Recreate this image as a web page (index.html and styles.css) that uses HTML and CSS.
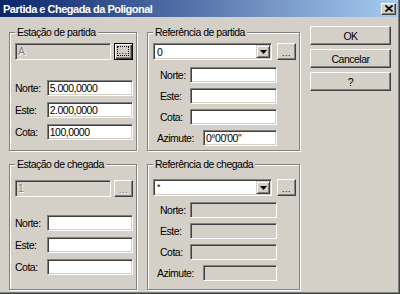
FILE: index.html
```html
<!DOCTYPE html>
<html>
  <head>
    <meta charset='UTF-8'>
    <title>Partida e Chegada da Poligonal</title>
    <link rel="stylesheet" href="styles.css">
  </head>
  <body>
    <div class='dialog'>
      <div class='titlebar'>
        <span class='titlebar__text'>Partida e Chegada da Poligonal</span>
        <span class='titlebar__close'>
          <svg width='8' height='7' viewBox='0 0 8 7'><path d='M0.5 0.5l7 6M7.5 0.5l-7 6' stroke='#000' stroke-width='1.7'/></svg>
        </span>
      </div>

      <div class='content'>
        <div class='groups'>
          <fieldset class='group group--top'>
            <legend class='group__title'>Estação de partida</legend>
            <div class='pick'>
              <div class='field field--off field--pick'>A</div>
              <div class='btn btn--dots btn--focus'><span class='btn__focus'>...</span></div>
            </div>
            <div class='coords coords--left'>
              <div class='row'><span class='row__label'>Norte:</span><div class='field'>5.000,0000</div></div>
              <div class='row'><span class='row__label'>Este:</span><div class='field'>2.000,0000</div></div>
              <div class='row'><span class='row__label'>Cota:</span><div class='field'>100,0000</div></div>
            </div>
          </fieldset>

          <fieldset class='group group--top group--ref'>
            <legend class='group__title'>Referência de partida</legend>
            <div class='pick'>
              <div class='combo'>
                <span class='combo__value'>0</span>
                <span class='combo__arrow'><svg width='7' height='4' viewBox='0 0 7 4'><path d='M0 0h7L3.5 4z' fill='#000'/></svg></span>
              </div>
              <div class='btn btn--dots'>...</div>
            </div>
            <div class='coords coords--right coords--first'>
              <div class='row row--ref'><span class='row__label'>Norte:</span><div class='field'></div></div>
              <div class='row row--ref'><span class='row__label'>Este:</span><div class='field'></div></div>
              <div class='row row--ref'><span class='row__label'>Cota:</span><div class='field'></div></div>
              <div class='row row--azimute'><span class='row__label'>Azimute:</span><div class='field field--az'>0°00'00"</div></div>
            </div>
          </fieldset>

          <fieldset class='group group--bottom'>
            <legend class='group__title'>Estação de chegada</legend>
            <div class='pick'>
              <div class='field field--off field--pick'>1</div>
              <div class='btn btn--dots btn--off'>...</div>
            </div>
            <div class='coords coords--left coords--chegada'>
              <div class='row'><span class='row__label'>Norte:</span><div class='field'></div></div>
              <div class='row'><span class='row__label'>Este:</span><div class='field'></div></div>
              <div class='row'><span class='row__label'>Cota:</span><div class='field'></div></div>
            </div>
          </fieldset>

          <fieldset class='group group--bottom group--ref'>
            <legend class='group__title'>Referência de chegada</legend>
            <div class='pick'>
              <div class='combo'>
                <span class='combo__value combo__value--star'>*</span>
                <span class='combo__arrow'><svg width='7' height='4' viewBox='0 0 7 4'><path d='M0 0h7L3.5 4z' fill='#000'/></svg></span>
              </div>
              <div class='btn btn--dots'>...</div>
            </div>
            <div class='coords coords--right coords--second'>
              <div class='row row--ref'><span class='row__label'>Norte:</span><div class='field field--off'></div></div>
              <div class='row row--ref'><span class='row__label'>Este:</span><div class='field field--off'></div></div>
              <div class='row row--ref'><span class='row__label'>Cota:</span><div class='field field--off'></div></div>
              <div class='row row--azimute'><span class='row__label'>Azimute:</span><div class='field field--off field--az'></div></div>
            </div>
          </fieldset>
        </div>

        <div class='actions'>
          <div class='btn btn--action'>OK</div>
          <div class='btn btn--action'>Cancelar</div>
          <div class='btn btn--action'>?</div>
        </div>
      </div>
    </div>
  </body>
</html>
```

FILE: styles.css
```css
html, body {
  margin: 0;
  background-color: #d4d0c8;
  font-family: 'Liberation Sans', Arial, sans-serif;
  font-size: 10.5px;
  letter-spacing: -0.5px;
  color: #000;
}

.dialog {
  display: flex;
  flex-direction: column;
  width: 400px;
  height: 294px;
  box-sizing: border-box;
  background-color: #d4d0c8;
  border-right: 1px solid #404040;
  border-bottom: 1px solid #404040;
  box-shadow: inset -1px -1px 0 #808080;
}

.titlebar {
  display: flex;
  align-items: center;
  justify-content: space-between;
  height: 17px;
  margin-right: 1px;
  padding: 0 2px 0 3px;
  background: linear-gradient(to right, #0a246a, #a6caf0);
}

.titlebar__text {
  color: #fff;
  font-weight: bold;
  font-size: 11px;
  letter-spacing: -0.5px;
}

.titlebar__close {
  display: flex;
  align-items: center;
  justify-content: center;
  width: 15px;
  height: 12px;
  box-sizing: border-box;
  background-color: #d4d0c8;
  border: 1px solid;
  border-color: #fff #404040 #404040 #fff;
  box-shadow: inset -1px -1px 0 #808080;
}

.content {
  display: flex;
  gap: 10px;
  padding: 9px 0 0 9px;
}

.groups {
  display: grid;
  grid-template-columns: 128px 153px;
  grid-template-rows: 125px 132px;
  column-gap: 10px;
  row-gap: 7px;
}

/* etched group box */
.group {
  margin: 0;
  min-width: 0;
  padding: 4px 3px 0 5px;
  border: 1px solid #808080;
  box-shadow: inset 1px 1px 0 #fff, 1px 1px 0 #fff;
}

.group--bottom {
  padding-top: 9px;
}

.group--ref.group--bottom {
  padding-top: 8px;
}

.group__title {
  padding: 0 2px;
  line-height: 13px;
  background-color: #d4d0c8;
}

.pick {
  display: flex;
  gap: 3px;
  height: 17px;
}

.group--ref .pick {
  gap: 5px;
}

.coords {
  display: flex;
  flex-direction: column;
}

.coords--left {
  gap: 6px;
  margin-top: 20px;
}

.coords--chegada {
  margin-top: 18px;
}

.coords--right {
  gap: 5px;
}

.coords--first {
  margin-top: 7px;
}

.coords--second {
  margin-top: 6px;
}

.row {
  display: flex;
  align-items: center;
  height: 16px;
}

.row__label {
  width: 32px;
}

.row--ref {
  padding-left: 7px;
}

.row--ref .row__label {
  width: 30px;
}

.row--azimute {
  padding-left: 4px;
}

.row--azimute .row__label {
  width: 46px;
}

/* sunken edit box */
.field {
  width: 87px;
  height: 16px;
  box-sizing: border-box;
  padding: 0 2px;
  line-height: 14px;
  white-space: nowrap;
  background-color: #fff;
  border: 1px solid;
  border-color: #808080 #fff #fff #808080;
  box-shadow: inset 1px 1px 0 #404040, inset -1px -1px 0 #d4d0c8;
}

.field--pick {
  width: 97px;
  height: 17px;
  line-height: 15px;
}

.field--az {
  width: 74px;
}

.field--off {
  background-color: #d4d0c8;
  color: #808080;
  text-shadow: 1px 1px 0 #fff;
}

.combo {
  display: flex;
  align-items: stretch;
  width: 120px;
  height: 17px;
  box-sizing: border-box;
  padding: 2px;
  background-color: #fff;
  border: 1px solid;
  border-color: #808080 #fff #fff #808080;
  box-shadow: inset 1px 1px 0 #404040, inset -1px -1px 0 #d4d0c8;
}

.combo__value {
  flex: 1;
  padding-left: 1px;
  line-height: 12px;
}

.combo__value--star {
  font-size: 9px;
  line-height: 10px;
}

.combo__arrow {
  display: flex;
  align-items: center;
  justify-content: center;
  width: 14px;
  box-sizing: border-box;
  margin: -1px -1px -1px 0;
  background-color: #d4d0c8;
  border: 1px solid;
  border-color: #d4d0c8 #404040 #404040 #d4d0c8;
  box-shadow: inset 1px 1px 0 #fff, inset -1px -1px 0 #808080;
}

/* raised push button */
.btn {
  display: flex;
  align-items: center;
  justify-content: center;
  box-sizing: border-box;
  background-color: #d4d0c8;
  border: 1px solid;
  border-color: #fff #404040 #404040 #fff;
  box-shadow: inset -1px -1px 0 #808080;
  cursor: default;
}

.btn--dots {
  width: 19px;
  height: 17px;
  font-size: 9px;
  letter-spacing: 0.5px;
  line-height: 10px;
  padding-top: 2px;
}

.btn--focus {
  border-color: #000;
  box-shadow: inset 1px 1px 0 #fff, inset -1px -1px 0 #404040, inset -2px -2px 0 #808080;
  padding: 2px 3px 3px 2px;
}

.btn__focus {
  flex: 1;
  align-self: stretch;
  display: flex;
  align-items: flex-end;
  justify-content: center;
  border: 1px dotted #000;
  line-height: 8px;
}

.btn--off {
  color: #808080;
  text-shadow: 1px 1px 0 #fff;
}

.actions {
  display: flex;
  flex-direction: column;
  gap: 4px;
}

.btn--action {
  width: 81px;
  height: 19px;
}
```
